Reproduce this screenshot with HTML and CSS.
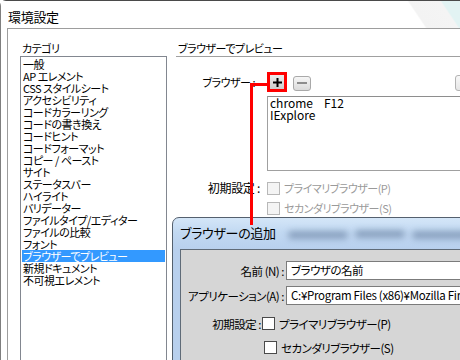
FILE: index.html
```html
<!DOCTYPE html>
<html lang="ja">
<head>
<meta charset="utf-8">
<title>環境設定</title>
<link rel="stylesheet" href="styles.css">
</head>
<body>
<div class="screen">
  <div class="window">
    <div class="titlebar"><span class="title">環境設定</span></div>
    <div class="frame">
      <div class="left">
        <div class="cat-label">カテゴリ</div>
        <ul class="cat-list">
          <li>一般</li>
          <li>AP エレメント</li>
          <li>CSS スタイルシート</li>
          <li>アクセシビリティ</li>
          <li>コードカラーリング</li>
          <li>コードの書き換え</li>
          <li>コードヒント</li>
          <li>コードフォーマット</li>
          <li>コピー / ペースト</li>
          <li>サイト</li>
          <li>ステータスバー</li>
          <li>ハイライト</li>
          <li>バリデーター</li>
          <li>ファイルタイプ/エディター</li>
          <li>ファイルの比較</li>
          <li>フォント</li>
          <li class="sel">ブラウザーでプレビュー</li>
          <li>新規ドキュメント</li>
          <li>不可視エレメント</li>
        </ul>
      </div>
      <div class="right">
        <div class="section-title">ブラウザーでプレビュー</div>
        <div class="browser-row">
          <span class="field-label">ブラウザー :</span>
          <div class="btns">
            <span class="hl"><span class="btn-plus"><svg width="9" height="9" viewBox="0 0 9 9"><path d="M3.5 0h2v3.5H9v2H5.5V9h-2V5.5H0v-2h3.5z" fill="#000"/></svg></span></span>
            <span class="btn-minus"><span class="minus-bar"></span></span>
            <span class="btn-edge"></span>
          </div>
        </div>
        <div class="browser-list">
          <div class="b-row"><span class="b-name">chrome</span><span>F12</span></div>
          <div class="b-row"><span class="b-name">IExplore</span></div>
        </div>
        <div class="defaults">
          <span class="def-label">初期設定 :</span>
          <span class="def-opt"><span class="chk-dis"></span><span class="dis-text">プライマリブラウザー(P)</span></span>
          <span></span>
          <span class="def-opt"><span class="chk-dis"></span><span class="dis-text">セカンダリブラウザー(S)</span></span>
        </div>
      </div>
    </div>
  </div>

  <div class="dialog">
    <div class="dlg-title">
      <span class="blur b1"></span><span class="blur b2"></span><span class="blur b3"></span>
      <span class="dlg-title-text">ブラウザーの追加</span>
    </div>
    <div class="dlg-body">
      <div class="form">
        <span class="f-label">名前 (N) :</span>
        <div class="input">ブラウザの名前</div>
        <span class="f-label">アプリケーション(A) :</span>
        <div class="input latin">C:¥Program Files (x86)¥Mozilla Firefox¥firefox.exe</div>
      </div>
      <div class="chk-row">
        <span class="c-label">初期設定 :</span>
        <span class="chk"></span>
        <span class="c-text">プライマリブラウザー(P)</span>
      </div>
      <div class="chk-row second">
        <span class="chk"></span>
        <span class="c-text">セカンダリブラウザー(S)</span>
      </div>
    </div>
  </div>

  <div class="callout-h"></div>
  <div class="callout-v"></div>
</div>
</body>
</html>
```
FILE: styles.css
```css
* { box-sizing: border-box; }
html, body { margin: 0; padding: 0; }
body { background: #fff; }

.screen {
  position: relative;
  width: 460px;
  height: 360px;
  overflow: hidden;
  background: #fff;
  font-family: "Noto Sans CJK JP", "Noto Sans", sans-serif;
  font-size: 11px;
  letter-spacing: -0.5px;
  font-feature-settings: "palt";
  color: #000;
}

.window {
  height: 100%;
  border-left: 1px solid #7f7f7f;
  border-top: 1px solid #4a4a4a;
  border-top-left-radius: 6px;
  background: #fff;
}

.titlebar {
  height: 27px;
  padding-left: 7px;
  background: linear-gradient(56deg, #fff 88.9%, #f3f3f3 89.3%, #f4f4f4 95.8%, #e2f3f3 96.2%);
}
.title {
  display: block;
  padding-top: 8px;
  font-size: 13px;
  line-height: 15px;
  letter-spacing: -0.3px;
}

.frame {
  display: flex;
  margin-left: 6px;
  height: 400px;
  border-top: 1px solid #9d9d9d;
  border-left: 1px solid #9d9d9d;
}

.left {
  flex: none;
  width: 162px;
  padding-left: 12px;
  padding-top: 12px;
}
.cat-label {
  line-height: 14px;
  padding-left: 2px;
  margin-bottom: 1px;
}
.cat-list {
  list-style: none;
  margin: 0;
  padding: 1px;
  width: 147px;
  height: 320px;
  border: 1px solid #828790;
}
.cat-list li {
  height: 12px;
  line-height: 12px;
  padding-left: 1px;
  white-space: nowrap;
}
.cat-list li.sel {
  background: #3399ff;
  color: #fff;
}

.right {
  flex: 1;
  margin-left: 6px;
}
.section-title {
  padding: 12px 0 1px 2px;
  line-height: 14px;
  border-bottom: 1px solid #a0a0a0;
}

.browser-row {
  display: flex;
  align-items: center;
  height: 20px;
  margin-top: 15px;
}
.field-label {
  flex: none;
  width: 91px;
  padding-right: 12px;
  text-align: right;
  line-height: 14px;
}
.btns {
  flex: none;
  width: 205px;
  display: flex;
  align-items: center;
}
.hl {
  display: block;
  width: 20px;
  height: 20px;
  border: 3px solid #ff0000;
}
.btn-plus {
  display: flex;
  align-items: center;
  justify-content: center;
  width: 14px;
  height: 14px;
  background: linear-gradient(#ececec, #cdcdcd);
}
.btn-minus {
  display: flex;
  align-items: center;
  justify-content: center;
  margin-left: 6px;
  margin-top: 2px;
  width: 18px;
  height: 15px;
  border: 1px solid #a9a9a9;
  border-radius: 3px;
  background: linear-gradient(#f6f6f6, #dadada);
}
.minus-bar {
  display: block;
  width: 10px;
  height: 2px;
  background: #8c8c8c;
}
.btn-edge {
  margin-left: auto;
  margin-top: 2px;
  width: 17px;
  height: 16px;
  border: 1px solid #b3b3b3;
  border-radius: 3px;
  background: linear-gradient(#f8f8f8, #e6e6e6);
}

.browser-list {
  margin-left: 91px;
  margin-top: 4px;
  width: 220px;
  height: 75px;
  padding: 0 2px;
  border: 1px solid #a0a0a0;
  border-top-color: #8e8e8e;
  font-size: 12px;
  letter-spacing: 0;
}
.b-row {
  display: flex;
  height: 12px;
  line-height: 12px;
  white-space: nowrap;
}
.b-name {
  width: 54px;
}

.defaults {
  display: grid;
  grid-template-columns: 91px auto;
  row-gap: 7px;
  margin-top: 11px;
}
.def-label {
  text-align: right;
  padding-right: 7px;
  line-height: 12px;
  font-size: 12px;
  letter-spacing: -0.3px;
}
.def-opt {
  display: flex;
  align-items: center;
  height: 13px;
}
.chk-dis {
  flex: none;
  width: 13px;
  height: 13px;
  border: 1px solid #b8b8b8;
  background: #f4f4f4;
}
.dis-text {
  margin-left: 4px;
  color: #9a9a9a;
  line-height: 13px;
  white-space: nowrap;
}

/* dialog overlay */
.dialog {
  position: absolute;
  left: 172px;
  top: 217px;
  width: 310px;
  height: 170px;
  padding-left: 7px;
  border: 1px solid #54606e;
  border-top-left-radius: 7px;
  background: linear-gradient(#d4e6f8 0px, #c2d9f2 14px, #b8d0ee 31px);
  font-size: 11.5px;
  letter-spacing: -0.5px;
}
.dlg-title {
  position: relative;
  height: 31px;
  padding-top: 7px;
  font-size: 13px;
  line-height: 16px;
  letter-spacing: -0.3px;
}
.dlg-title-text {
  position: relative;
  white-space: nowrap;
}
.blur {
  position: absolute;
  height: 8px;
  border-radius: 4px;
  background: rgba(70, 95, 130, 0.45);
  filter: blur(3px);
}
.b1 { left: 108px; top: 13px; width: 60px; }
.b2 { left: 175px; top: 12px; width: 50px; }
.b3 { left: 232px; top: 13px; width: 60px; }

.dlg-body {
  height: 200px;
  padding-top: 11px;
  border-top: 1px solid #5f6b78;
  border-left: 1px solid #5f6b78;
  background: #d6d6d6;
}
.form {
  display: grid;
  grid-template-columns: 105px 1fr;
  row-gap: 6px;
  align-items: center;
}
.f-label {
  text-align: right;
  padding-right: 2px;
  white-space: nowrap;
  line-height: 14px;
}
.input {
  height: 19px;
  padding-left: 4px;
  line-height: 17px;
  border: 1px solid #7b7b7b;
  background: #fff;
  white-space: nowrap;
  overflow: hidden;
}
.input.latin {
  letter-spacing: -0.3px;
}
.chk-row {
  display: flex;
  align-items: center;
  height: 13px;
  margin-top: 12px;
}
.chk-row.second {
  margin-top: 11px;
  padding-left: 82px;
}
.c-label {
  width: 80px;
  text-align: right;
  white-space: nowrap;
}
.chk {
  flex: none;
  width: 13px;
  height: 13px;
  margin-left: 1px;
  border: 1px solid #4a4a4a;
  background: #fff;
}
.c-text {
  margin-left: 4px;
  white-space: nowrap;
}

/* red callout line */
.callout-h {
  position: absolute;
  left: 251px;
  top: 83px;
  width: 17px;
  height: 3px;
  background: #ff0000;
}
.callout-v {
  position: absolute;
  left: 250px;
  top: 83px;
  width: 3px;
  height: 142px;
  background: #ff0000;
}
```
